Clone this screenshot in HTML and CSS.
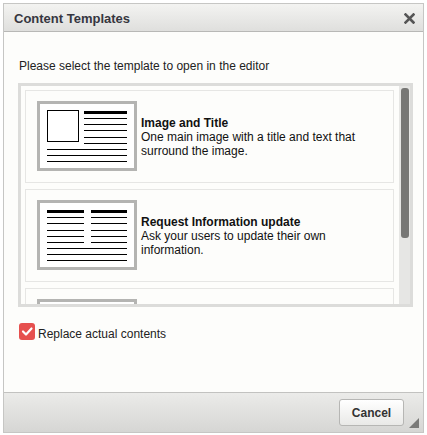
FILE: index.html
```html
<!DOCTYPE html>
<html>
<head>
<meta charset="utf-8">
<link rel="stylesheet" href="styles.css">
</head>
<body>
<div class="dialog">
  <div class="titlebar">
    <span class="title">Content Templates</span>
    <svg class="close" width="11" height="11" viewBox="0 0 11 11"><path d="M1.5 1.5 L9.5 9.5 M9.5 1.5 L1.5 9.5" stroke="#555" stroke-width="2.6" stroke-linecap="square" fill="none"/></svg>
  </div>
  <div class="body">
    <div class="intro">Please select the template to open in the editor</div>
    <div class="listbox">
      <div class="items">
        <div class="item">
          <div class="thumb">
            <svg width="94" height="64" viewBox="0 0 94 64">
              <rect x="7.5" y="6.5" width="31" height="31" fill="none" stroke="#000" stroke-width="1"/>
              <rect x="44" y="7" width="43" height="3" fill="#000"/>
              <rect x="44" y="14" width="43" height="1" fill="#000"/>
              <rect x="44" y="20" width="43" height="1" fill="#000"/>
              <rect x="44" y="26" width="43" height="1" fill="#000"/>
              <rect x="44" y="33" width="43" height="1" fill="#000"/>
              <rect x="44" y="39" width="43" height="1" fill="#000"/>
              <rect x="7" y="45" width="80" height="1" fill="#000"/>
              <rect x="7" y="51" width="80" height="1" fill="#000"/>
              <rect x="7" y="57" width="80" height="1" fill="#000"/>
            </svg>
          </div>
          <div class="info">
            <div class="name">Image and Title</div>
            <div class="desc">One main image with a title and text that surround the image.</div>
          </div>
        </div>
        <div class="item">
          <div class="thumb">
            <svg width="94" height="64" viewBox="0 0 94 64">
              <rect x="7" y="7" width="37" height="3" fill="#000"/>
              <rect x="51" y="7" width="36" height="3" fill="#000"/>
              <rect x="7" y="14" width="37" height="1" fill="#000"/>
              <rect x="7" y="20" width="37" height="1" fill="#000"/>
              <rect x="7" y="27" width="37" height="1" fill="#000"/>
              <rect x="7" y="33" width="37" height="1" fill="#000"/>
              <rect x="7" y="39" width="37" height="1" fill="#000"/>
              <rect x="51" y="14" width="36" height="1" fill="#000"/>
              <rect x="51" y="20" width="36" height="1" fill="#000"/>
              <rect x="51" y="27" width="36" height="1" fill="#000"/>
              <rect x="51" y="33" width="36" height="1" fill="#000"/>
              <rect x="51" y="39" width="36" height="1" fill="#000"/>
              <rect x="7" y="45" width="80" height="1" fill="#000"/>
              <rect x="7" y="51" width="80" height="1" fill="#000"/>
              <rect x="7" y="57" width="80" height="1" fill="#000"/>
            </svg>
          </div>
          <div class="info">
            <div class="name">Request Information update</div>
            <div class="desc">Ask your users to update their own information.</div>
          </div>
        </div>
        <div class="item">
          <div class="thumb">
            <svg width="94" height="64" viewBox="0 0 94 64">
              <rect x="7" y="7" width="80" height="3" fill="#000"/>
              <rect x="7" y="14" width="80" height="1" fill="#000"/>
              <rect x="7" y="20" width="80" height="1" fill="#000"/>
            </svg>
          </div>
        </div>
      </div>
      <div class="scrolltrack"><div class="scrollthumb"></div></div>
    </div>
    <label class="check">
      <span class="box">
        <svg width="16" height="17" viewBox="0 0 16 17"><path d="M4 8.5 L7 11.5 L12.5 5.5" stroke="#fff" stroke-width="2.2" fill="none" stroke-linecap="round" stroke-linejoin="round"/></svg>
      </span>
      <span class="checktext">Replace actual contents</span>
    </label>
  </div>
  <div class="footer">
    <button class="cancel">Cancel</button>
    <span class="grip"></span>
  </div>
</div>
</body>
</html>
```
FILE: styles.css
```css
html, body {
  margin: 0;
  padding: 0;
  background: #ffffff;
}
body {
  font-family: "Liberation Sans", Arial, sans-serif;
  color: #222;
}
.dialog {
  margin: 3px 0 0 3px;
  width: 421px;
  height: 430px;
  box-sizing: border-box;
  border: 1px solid #c6c6c4;
  background: #fdfdfb;
  display: flex;
  flex-direction: column;
}
.titlebar {
  height: 28px;
  box-sizing: border-box;
  border-bottom: 1px solid #b8b8b6;
  background: linear-gradient(#f3f3f1, #dfdfdd);
  display: flex;
  align-items: center;
  justify-content: space-between;
  padding: 0 8px 0 10px;
}
.title {
  font-weight: bold;
  font-size: 13px;
  color: #363640;
  margin-top: 1px;
}
.close {
  display: block;
  margin-top: 2px;
}
.body {
  flex: 1;
  padding: 27px 0 0 14px;
}
.intro {
  font-size: 12px;
  line-height: 14px;
  color: #222;
  padding-left: 1px;
}
.listbox {
  margin-top: 10px;
  width: 395px;
  height: 224px;
  box-sizing: border-box;
  border: 3px solid #dcdcda;
  background: #fdfdfb;
  display: flex;
}
.items {
  flex: 1;
  overflow: hidden;
  padding: 4px 5px 0 4px;
  display: flex;
  flex-direction: column;
  gap: 6px;
}
.item {
  flex: 0 0 auto;
  height: 93px;
  box-sizing: border-box;
  border: 1px solid #e6e6e4;
  padding: 10px 11px;
  display: flex;
  align-items: center;
  gap: 4px;
}
.thumb {
  flex: 0 0 auto;
  align-self: flex-start;
  width: 100px;
  height: 70px;
  box-sizing: border-box;
  border: 3px solid #b4b4b2;
  background: #fff;
}
.thumb svg {
  display: block;
}
.info {
  font-size: 12px;
  line-height: 14px;
  color: #111;
}
.name {
  font-weight: bold;
}
.scrolltrack {
  width: 11px;
  background: #e6e6e4;
  padding: 2px 1px 0 2px;
  box-sizing: border-box;
}
.scrollthumb {
  width: 8px;
  height: 150px;
  background: #777775;
  border-radius: 3px;
}
.check {
  margin: 14px 0 0 1px;
  display: flex;
  align-items: center;
  gap: 3px;
}
.box {
  width: 16px;
  height: 17px;
  border-radius: 3px;
  background: #e6504e;
}
.box svg {
  display: block;
}
.checktext {
  font-size: 12px;
  line-height: 14px;
  color: #222;
  margin-top: 6px;
}
.footer {
  position: relative;
  height: 40px;
  box-sizing: border-box;
  border-top: 1px solid #c2c2c0;
  background: linear-gradient(#ebebe9, #d6d6d4);
  display: flex;
  justify-content: flex-end;
  align-items: flex-start;
  padding: 6px 19px 0 0;
}
.cancel {
  width: 65px;
  height: 27px;
  box-sizing: border-box;
  border: 1px solid #b6b6b4;
  border-radius: 3px;
  background: linear-gradient(#ffffff, #e9e9e7);
  font-family: "Liberation Sans", Arial, sans-serif;
  font-weight: bold;
  font-size: 12px;
  color: #333;
  padding: 0;
}
.grip {
  position: absolute;
  right: 4px;
  bottom: 4px;
  width: 0;
  height: 0;
  border-left: 10px solid transparent;
  border-bottom: 10px solid #7a7a78;
}
```
